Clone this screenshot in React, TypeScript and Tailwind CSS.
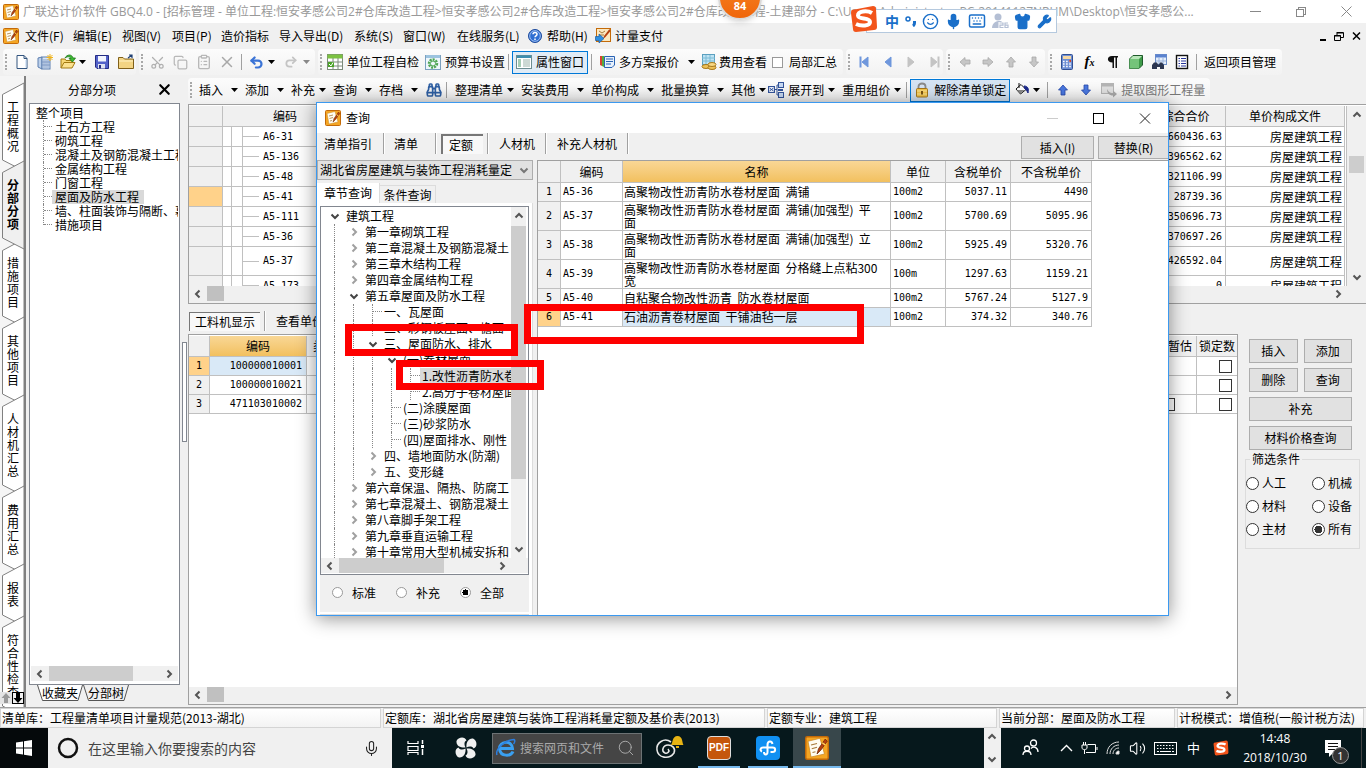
import React from "react";
import { Mic, Search, Shirt, Wrench, Smile, Keyboard, Scissors, Copy, ClipboardList, X, Binoculars, Volume2, Undo2, Redo2 } from "lucide-react";

const MONO = "font-['DejaVu_Sans_Mono','Noto_Sans_CJK_SC',monospace] text-[10px]";

/* ---------- icons ---------- */

function AppIcon({ size = 16 }: { size?: number }) {
  return (
    <svg width={size} height={size} viewBox="0 0 16 16" className="shrink-0">
      <rect x="0.5" y="0.5" width="15" height="15" rx="1" fill="#f5a623" stroke="#c46a08" />
      <path d="M2 3.500L10 1.500L13 12L4 14Z" fill="#fffdf2" stroke="#c98a2a" strokeWidth="0.5" />
      <path d="M4 6L8 5M4.500 8.500L8 7.500M5 11L7 10.500" stroke="#a87a3c" strokeWidth="0.8" />
      <path d="M13.500 2L9 8.500L8 12L10.500 9.500L14.800 3.500Z" fill="#b5400f" stroke="#6e2405" strokeWidth="0.5" />
      <path d="M11.500 4.500L13.500 6" stroke="#ffd45c" />
    </svg>
  );
}

function Icon({ children, w = 16 }: { children: React.ReactNode; w?: number }) {
  return (
    <svg width={w} height="16" viewBox="0 0 16 16" className="shrink-0" fill="none">
      {children}
    </svg>
  );
}

const NewDoc = () => (
  <Icon>
    <path d="M3 1.5H10L13 4.5V14.5H3Z" fill="#fff" stroke="#33557f" />
    <path d="M10 1.5V4.5H13" stroke="#33557f" />
    <path d="M12 6V13.5" stroke="#b9d0ec" />
  </Icon>
);
const NewBook = () => (
  <Icon>
    <path d="M1 4L5 3V15L1 13Z" fill="#bcd0ea" stroke="#5d7fb0" />
    <rect x="5" y="3" width="8" height="12" fill="#d9e6f6" stroke="#5d7fb0" />
    <path d="M7 5V14M9 5V14M11 5V14M5 8H13M5 11H13" stroke="#7391be" strokeWidth="0.8" />
    <path d="M13 0V7M9.5 3.5H16M10.5 1L15.5 6M15.5 1L10.5 6" stroke="#f2b51d" />
  </Icon>
);
const OpenFolder = () => (
  <Icon>
    <path d="M1 14V5H5L6 6.500H12V9" fill="#f7d774" stroke="#a27a12" />
    <path d="M1 14L4 8.500H15L12 14Z" fill="#fbe18f" stroke="#a27a12" />
    <path d="M5 4C7 0 12 0 13 4H15.500L12.500 8L9 4.500H11C10 2.500 8 2 5 4Z" stroke="#1f7a1a" fill="#3cb834" strokeWidth="0.800" />
  </Icon>
);
const Save = () => (
  <Icon>
    <path d="M1.500 1.500H14.500V14.500H3L1.500 13Z" fill="#5362c9" stroke="#252c84" />
    <rect x="4" y="2" width="8" height="5.500" fill="#f2f5ff" />
    <rect x="4" y="10" width="7" height="4.500" fill="#dfe3f0" />
    <rect x="5" y="11" width="2" height="3.500" fill="#252c84" />
  </Icon>
);
const Folder = () => (
  <Icon>
    <path d="M0.500 3.500H5L6.500 5H15.500V14.500H0.500Z" fill="#f3d483" stroke="#80601a" />
    <path d="M1 7H15" stroke="#fff2c4" />
    <path d="M10 4L14 1M14 4V1H11" stroke="#1e3f73" strokeWidth="1.200" />
  </Icon>
);
const GridCheck = () => (
  <Icon>
    <rect x="0.500" y="0.500" width="15" height="15" fill="#fff" stroke="#7c8a7a" />
    <rect x="0.500" y="0.500" width="15" height="4" fill="#7cc242" />
    <path d="M0 8H16M0 12H16M6 4V16M11 4V16" stroke="#7c8a7a" />
    <rect x="1" y="8" width="6" height="5" fill="#4ba229" />
    <path d="M2 10L4 12L6 8.500" stroke="#fff" />
  </Icon>
);
const GearWindow = () => (
  <Icon>
    <rect x="0.500" y="1.500" width="15" height="14" fill="#eef6fc" stroke="#7ba0bf" />
    <rect x="1" y="1" width="14" height="3" fill="#9cc3df" />
    <circle cx="8" cy="9.500" r="4" stroke="#4da552" strokeWidth="2.400" strokeDasharray="2 1" />
    <circle cx="8" cy="9.500" r="2.500" stroke="#4da552" />
  </Icon>
);
const ListWindow = () => (
  <Icon>
    <rect x="0.500" y="1.500" width="15" height="13" fill="#fff" stroke="#6c8d91" />
    <rect x="1" y="1.500" width="14" height="2.500" fill="#3f8fb0" />
    <path d="M2 6H5M2 8H5M2 10H5M2 12H5" stroke="#4c9a6a" />
    <path d="M7 6H14M7 8H14M7 10H14M7 12H14" stroke="#9ab2a9" />
  </Icon>
);
const Plans = () => (
  <Icon>
    <path d="M1 2V11L3 12V2Z" fill="#d8412f" />
    <path d="M3 2V12L5 13V2Z" fill="#58ac3d" />
    <path d="M5.500 2.500H15.500V11L13 13.500H5.500Z" fill="#e8f1fc" stroke="#2a63b4" />
    <path d="M7 5H14M7 7.500H14M7 10H12" stroke="#2a63b4" />
  </Icon>
);
const Coins = () => (
  <Icon>
    <rect x="1.500" y="0.500" width="12" height="10" fill="#bfe3f3" stroke="#5ba0c0" />
    <path d="M1 4H14M1 7H14M5 1V10M9 1V10" stroke="#7bbbd6" />
    <ellipse cx="5" cy="12.500" rx="4" ry="2" fill="#eec25a" stroke="#a97a1d" />
    <ellipse cx="11" cy="13.500" rx="4" ry="2" fill="#eec25a" stroke="#a97a1d" />
    <ellipse cx="11" cy="10.500" rx="4" ry="2" fill="#f8d885" stroke="#a97a1d" />
  </Icon>
);
const Nav = ({ kind, c }: { kind: "first" | "prev" | "next" | "last"; c: string }) => (
  <Icon>
    {(kind === "first" || kind === "prev") && <path d="M11 3V13L5 8Z" fill={c} stroke={c} />}
    {(kind === "next" || kind === "last") && <path d="M5 3V13L11 8Z" fill={c} stroke={c} />}
    {kind === "first" && <path d="M3.500 2.500V13.500" stroke={c} strokeWidth="2" />}
    {kind === "last" && <path d="M12.500 2.500V13.500" stroke={c} strokeWidth="2" />}
  </Icon>
);
const BlockArrow = ({ dir, c, s = "none" }: { dir: "l" | "r" | "u" | "d"; c: string; s?: string }) => {
  const d = {
    l: "M3 8L8 3.500V6H13V10H8V12.500Z",
    r: "M13 8L8 3.500V6H3V10H8V12.500Z",
    u: "M8 3L12.500 8H10V13H6V8H3.500Z",
    d: "M8 13L12.500 8H10V3H6V8H3.500Z",
  }[dir];
  return (
    <Icon>
      <path d={d} fill={c} stroke={s} strokeWidth="0.800" />
    </Icon>
  );
};
const Calc = () => (
  <Icon>
    <rect x="2.500" y="0.500" width="11" height="15" rx="1" fill="#6e8fd4" stroke="#304f92" />
    <rect x="4" y="2" width="8" height="3" fill="#f6d8a4" />
    <path d="M4 7.500H12M4 10H12M4 12.500H12" stroke="#fff" strokeWidth="1.500" strokeDasharray="1.600 1.500" />
    <path d="M10.300 7H12" stroke="#d34524" strokeWidth="2" />
  </Icon>
);
const Pilcrow = () => (
  <Icon>
    <path d="M7 2H13V3.500H12V14H10.500V3.500H9V14H7.500V8.500C1.500 8.500 1.500 2 7 2Z" fill="#111" />
  </Icon>
);
const Cube = () => (
  <Icon>
    <path d="M1.500 5L5 1.500H14.500V11L11 14.500H1.500Z" fill="#3e9b49" stroke="#1f5a2b" />
    <path d="M1.500 5H11V14.500H1.500Z" fill="#74c47a" />
    <path d="M2 5L5 2H14L11 5Z" fill="#b9e6b9" />
  </Icon>
);
const TableFind = () => (
  <Icon>
    <rect x="4.500" y="0.500" width="11" height="10" fill="#e4eefb" stroke="#6e8fc8" />
    <rect x="4.500" y="0.500" width="11" height="3" fill="#5a82cf" />
    <path d="M5 7H15M8 4V10M12 4V10" stroke="#9bb3dc" />
    <path d="M1 11L3 8.500H6L7 10.500H8L9 8.500H11L13 11V15H9V13H6V15H1Z" fill="#2b3550" />
  </Icon>
);
const ListDoc = () => (
  <Icon>
    <rect x="2.500" y="1.500" width="11" height="13" fill="#fff" stroke="#111" strokeWidth="1.400" />
    <path d="M4.500 4.500H6M4.500 7H6M4.500 9.500H6M4.500 12H6M7 4.500H12M7 7H12M7 9.500H12M7 12H12" stroke="#26349a" />
  </Icon>
);
const Expand = () => (
  <Icon>
    <rect x="0.500" y="4.500" width="6" height="6" fill="#e9effa" stroke="#33549a" />
    <path d="M1.500 6L5.500 9M5.500 6L1.500 9" stroke="#33549a" />
    <path d="M7 7.500H9M9 3V13M9 3H10M9 13H10" stroke="#33549a" />
    <rect x="10.500" y="0.500" width="5" height="5" fill="#c9daf4" stroke="#33549a" />
    <rect x="10.500" y="10.500" width="5" height="5" fill="#c9daf4" stroke="#33549a" />
    <path d="M10 8H15" stroke="#33549a" strokeWidth="2" />
  </Icon>
);
const Lock = () => (
  <Icon>
    <path d="M4.500 7V4.500C4.500 0.500 11.500 0.500 11.500 4.500V7" stroke="#8a8a8a" strokeWidth="1.800" />
    <rect x="2.500" y="6.500" width="11" height="8.500" rx="1" fill="#f5c64b" stroke="#a6771a" />
    <path d="M3 9H13M3 12H13" stroke="#fae49a" />
    <path d="M8 9V12.500" stroke="#7a5410" strokeWidth="2" />
  </Icon>
);
const Bucket = () => (
  <Icon>
    <path d="M2 7L7 2.500L12 7.500L6.500 12Z" fill="#fff" stroke="#111" />
    <path d="M3 8H11L6.500 11.500Z" fill="#8a8a8a" />
    <path d="M5 1V6" stroke="#111" />
    <path d="M10 4C14 4 15 7 14 11C13 9 12.500 8 11 7Z" fill="#1c2a8c" stroke="#1c2a8c" />
  </Icon>
);
const Extract = () => (
  <Icon>
    <rect x="0.500" y="1.500" width="12" height="10" fill="#e0e0e0" stroke="#b5b5b5" />
    <rect x="0.500" y="1.500" width="12" height="3" fill="#b5b5b5" />
    <path d="M6 7C8 11 10 11 12 11V8.500L16 12L12 15.500V13.500C8 13.500 6 11 6 7Z" fill="#a9a9a9" />
  </Icon>
);
const Help = () => (
  <Icon>
    <circle cx="8" cy="8" r="6.500" fill="#2f6fd2" stroke="#1d4a9c" />
    <circle cx="8" cy="8" r="5.300" stroke="#cfe0fa" strokeWidth="0.700" />
    <path d="M6 6.300C6 3.800 10 3.800 10 6.200C10 7.800 8 7.800 8 9.300M8 10.500V12" stroke="#fff" strokeWidth="1.500" />
  </Icon>
);
const PayIcon = () => (
  <Icon>
    <rect x="1.500" y="0.500" width="14" height="13" fill="#fbe8c0" stroke="#c46a08" />
    <path d="M4 3L7 5L10 3M5 7H9" stroke="#a87a3c" />
    <path d="M14.500 1L9 8L8 11L10.500 9L15.500 3Z" fill="#b5400f" />
    <path d="M0.500 8.500H4V6L9 10.500L4 15V12.500H0.500Z" fill="#2f8fe0" stroke="#1a5ca0" strokeWidth="0.700" />
  </Icon>
);
const SogouS = ({ size }: { size: number }) => (
  <svg width={size} height={size} viewBox="0 0 28 28" className="shrink-0">
    <path d="M2 5L23 1Q26 1 26 4L27 22Q27 25 24 25L6 27Q3 27 3 24L1 8Q1 5 2 5Z" fill="#f2541b" />
    <path d="M22 8C17 5 8 6 8 10.500C8 15 20 12 20 17C20 21 11 21.500 6 19" fill="none" stroke="#fff" strokeWidth="4" />
  </svg>
);

function Chev({ dir, c = "#555", className = "" }: { dir: "l" | "r" | "u" | "d"; c?: string; className?: string }) {
  const d = { l: "M6.500 1.500L3 5L6.500 8.500", r: "M3.500 1.500L7 5L3.500 8.500", u: "M1.500 6.500L5 3L8.500 6.500", d: "M1.500 3.500L5 7L8.500 3.500" }[dir];
  return (
    <svg width="10" height="10" viewBox="0 0 10 10" className={"shrink-0 " + className}>
      <path d={d} fill="none" stroke={c} strokeWidth="2" />
    </svg>
  );
}

/* ---------- toolbar parts ---------- */

const Grip = () => <span className="mx-0.5 h-4 w-[3px] shrink-0 border-l-2 border-dotted border-[#a8a8a8]" />;
const Sep = () => <span className="mx-[3px] h-4 w-px shrink-0 bg-[#a0a0a0]" />;
const Caret = ({ c = "#000" }: { c?: string }) => (
  <svg width="7" height="4" viewBox="0 0 7 4" className="shrink-0">
    <path d="M0 0H7L3.500 4Z" fill={c} />
  </svg>
);
function Group({ children, className = "" }: { children: React.ReactNode; className?: string }) {
  return <div className={"flex h-full shrink-0 items-center rounded-sm bg-linear-to-b from-[#fcfcfc] to-[#f2f2f2] " + className}>{children}</div>;
}
function IconBtn({ label, children, className = "w-[23px]" }: { label: string; children: React.ReactNode; className?: string }) {
  return (
    <button aria-label={label} className={"flex shrink-0 items-center justify-center " + className}>
      {children}
    </button>
  );
}
function Drop({ label, tight = false, last = false }: { label: string; tight?: boolean; last?: boolean }) {
  return (
    <button className={"flex shrink-0 items-center whitespace-nowrap " + (tight ? "gap-1 " : "gap-2 ") + (last ? "pr-0.5" : "pr-[7px]")}>
      {label}
      <Caret />
    </button>
  );
}

const menus: [string, string][] = [
  ["文件(F)", "w-12"], ["编辑(E)", "w-[49px]"], ["视图(V)", "w-[50px]"], ["项目(P)", "w-[49px]"], ["造价指标", "w-[58px]"],
  ["导入导出(D)", "w-[75px]"], ["系统(S)", "w-[49px]"], ["窗口(W)", "w-[54px]"], ["在线服务(L)", "w-[70px]"],
];

function TopBars() {
  return (
    <>
      <header className="flex h-[23px] shrink-0 items-center bg-white pl-[3px] text-[#999]">
        <AppIcon />
        <h1 className="ml-1 min-w-0 overflow-hidden font-['Open_Sans','Noto_Sans_CJK_SC',sans-serif] whitespace-nowrap">
          广联达计价软件 GBQ4.0 - [招标管理 - 单位工程:恒安孝感公司2#仓库改造工程&gt;恒安孝感公司2#仓库改造工程&gt;恒安孝感公司2#仓库改造工程-土建部分 - C:\Users\Administrator.PC-20141127NRHM\Desktop\恒安孝感公...
        </h1>
        <div className="ml-auto flex shrink-0 items-center gap-[35px] pr-[14px]">
          <button aria-label="最小化" className="h-px w-[11px] bg-[#888]" />
          <button aria-label="还原" className="relative size-[10px]">
            <span className="absolute top-0 right-0 size-2 border border-[#888]" />
            <span className="absolute bottom-0 left-0 size-2 border border-[#888] bg-white" />
          </button>
          <button aria-label="关闭"><svg width="11" height="11"><path d="M0.500 0.500L10.500 10.500M10.500 0.500L0.500 10.500" stroke="#888" /></svg></button>
        </div>
      </header>
      <nav className="flex h-[26px] shrink-0 items-center pl-[3px]">
        <AppIcon />
        <div className="ml-1.5 flex items-center">
          {menus.map(([t, w]) => (
            <button key={t} className={"shrink-0 text-left whitespace-nowrap " + w}>{t}</button>
          ))}
        </div>
        <button className="flex w-[68px] items-center gap-1 whitespace-nowrap"><Help />帮助(H)</button>
        <button className="flex items-center gap-1 whitespace-nowrap"><PayIcon />计量支付</button>
        <div className="ml-auto flex items-center gap-2 pr-[5px]">
          <button aria-label="最小化文档" className="mt-2 h-0.5 w-1.5 bg-black" />
          <button aria-label="还原文档"><svg width="10" height="9"><path d="M3 0.500H9.500V5.500H7M3 0V3M0.500 3.500H6.500V8.500H0.500Z M0 4H7M3 1H9" fill="none" stroke="#000" /></svg></button>
          <button aria-label="关闭文档"><svg width="9" height="8"><path d="M1 0.500L8 7.500M8 0.500L1 7.500" stroke="#000" strokeWidth="1.500" /></svg></button>
        </div>
      </nav>
      <div className="mb-px flex h-[26px] shrink-0 items-center gap-[3px] pl-[3px]">
        <Group className="w-[133px]">
          <Grip />
          <IconBtn label="新建"><NewDoc /></IconBtn>
          <IconBtn label="新建工程"><NewBook /></IconBtn>
          <IconBtn label="打开"><OpenFolder /></IconBtn>
          <Caret />
          <IconBtn label="保存" className="ml-1 w-6"><Save /></IconBtn>
          <IconBtn label="文件夹"><Folder /></IconBtn>
        </Group>
        <Group className="w-[176px]">
          <Grip />
          <IconBtn label="剪切"><Scissors size={15} color="#b0b0b0" className="-rotate-90" /></IconBtn>
          <IconBtn label="复制"><Copy size={15} color="#b8b8b8" /></IconBtn>
          <IconBtn label="粘贴"><ClipboardList size={16} color="#b8b8b8" /></IconBtn>
          <IconBtn label="删除"><X size={18} color="#a8a8a8" /></IconBtn>
          <Sep />
          <IconBtn label="撤销"><Undo2 size={15} color="#3b74d6" strokeWidth={3.5} /></IconBtn>
          <Caret />
          <IconBtn label="重做" className="ml-1 w-6"><Redo2 size={14} color="#c4c4c4" strokeWidth={3} /></IconBtn>
          <Caret c="#888" />
        </Group>
        <Group className="w-[525px]">
          <Grip />
          <button className="flex items-center gap-1 pl-0.5 whitespace-nowrap"><GridCheck />单位工程自检</button>
          <button className="ml-1.5 flex items-center gap-1 whitespace-nowrap"><GearWindow />预算书设置</button>
          <Sep />
          <button className="flex h-[23px] items-center gap-1 border border-[#0078d7] bg-[#e1ecf6] px-[3px] whitespace-nowrap"><ListWindow />属性窗口</button>
          <Sep />
          <button className="ml-1 flex items-center gap-1 whitespace-nowrap"><Plans />多方案报价<span className="w-px" /><Caret /></button>
          <button className="ml-1.5 flex items-center gap-0.5 whitespace-nowrap"><Coins />费用查看</button>
          <label className="ml-[5px] flex items-center gap-1.5 whitespace-nowrap">
            <input type="checkbox" className="size-[11px] appearance-none border border-[#999] bg-white" />局部汇总
          </label>
        </Group>
        <Group className="w-[97px]">
          <Grip />
          <IconBtn label="首条"><Nav kind="first" c="#6f97dc" /></IconBtn>
          <IconBtn label="上一条"><Nav kind="prev" c="#6f97dc" /></IconBtn>
          <IconBtn label="下一条"><Nav kind="next" c="#c4c4c4" /></IconBtn>
          <IconBtn label="末条"><Nav kind="last" c="#c4c4c4" /></IconBtn>
        </Group>
        <Group className="w-[99px]">
          <Grip />
          <IconBtn label="左移"><BlockArrow dir="l" c="#c6c6c6" s="#a8a8a8" /></IconBtn>
          <IconBtn label="右移"><BlockArrow dir="r" c="#c6c6c6" s="#a8a8a8" /></IconBtn>
          <IconBtn label="上移"><BlockArrow dir="u" c="#c6c6c6" s="#a8a8a8" /></IconBtn>
          <IconBtn label="下移"><BlockArrow dir="d" c="#c6c6c6" s="#a8a8a8" /></IconBtn>
        </Group>
        <Group className="pr-1.5">
          <Grip />
          <IconBtn label="计算器"><Calc /></IconBtn>
          <IconBtn label="函数"><span className="font-['Liberation_Serif',serif] text-[15px] leading-4 font-bold italic">f<span className="text-[10px]">x</span></span></IconBtn>
          <IconBtn label="段落"><Pilcrow /></IconBtn>
          <IconBtn label="图元"><Cube /></IconBtn>
          <IconBtn label="查找表"><TableFind /></IconBtn>
          <IconBtn label="报表"><ListDoc /></IconBtn>
          <Sep />
          <button className="ml-1 whitespace-nowrap">返回项目管理</button>
        </Group>
      </div>
    </>
  );
}

function EditToolbar() {
  return (
    <div className="mt-0.5 flex h-6 shrink-0 items-center">
      <Group className="pr-[5px]">
        <Grip />
        <span className="w-1" />
        <Drop label="插入" />
        <Drop label="添加" />
        <Drop label="补充" tight />
        <Drop label="查询" />
        <Drop label="存档" />
        <IconBtn label="查找" className="w-[18px]"><Binoculars size={16} color="#2e5fa3" strokeWidth={2.5} /></IconBtn>
        <Sep />
        <span className="w-[5px]" />
        <Drop label="整理清单" tight />
        <Drop label="安装费用" />
        <Drop label="单价构成" />
        <Drop label="批量换算" />
        <Drop label="其他" tight last />
        <Expand />
        <span className="w-1" />
        <Drop label="展开到" tight />
        <Drop label="重用组价" tight last />
        <Sep />
        <button className="flex h-[23px] items-center gap-1 border border-[#0078d7] bg-[#d5e3f2] px-[3px] whitespace-nowrap"><Lock />解除清单锁定</button>
        <IconBtn label="填充"><Bucket /></IconBtn>
        <Caret />
        <span className="w-1" />
        <Sep />
        <IconBtn label="上"><BlockArrow dir="u" c="#4a78e0" s="#2747a8" /></IconBtn>
        <IconBtn label="下"><BlockArrow dir="d" c="#4a78e0" s="#2747a8" /></IconBtn>
        <button className="ml-1 flex items-center gap-1 whitespace-nowrap text-[#777]"><Extract />提取图形工程量</button>
      </Group>
    </div>
  );
}

/* ---------- left side ---------- */

const sideTabs = ["工程概况", "分部分项", "措施项目", "其他项目", "人材机汇总", "费用汇总", "报表", "符合性检查"];

function SideTabs() {
  return (
    <aside className="relative w-[26px] shrink-0 overflow-hidden border-r-2 border-[#808080] bg-[#f5f5f5] pt-[11px]">
      {sideTabs.map((t) => {
        const h = t.length * 13 + 26;
        const on = t === "分部分项";
        return (
          <button key={t} className={"relative ml-0.5 block w-[22px] py-[13px] " + (on ? "z-10 font-bold" : "")}>
            <svg width="22" height={h} className="absolute inset-0 overflow-visible">
              <path d={`M22 -4L0.500 7.500V${h - 5}L22 ${h + 6}Z`} fill={on ? "#f0f0f0" : "#fff"} stroke="#808080" />
            </svg>
            <span className="relative flex flex-col items-center">
              {[...t].map((ch, i) => <span key={i} className="h-[13px] leading-[13px]">{ch}</span>)}
            </span>
          </button>
        );
      })}
      <div className="absolute bottom-[3px] left-0 z-20 flex">
        <button aria-label="向上滚动" className="flex h-3 w-3 items-center justify-center bg-[#e4e4e4]"><BlockArrow dir="u" c="#999" /></button>
        <button aria-label="向下滚动" className="flex h-3 w-3 items-center justify-center border border-black bg-[#f0f0f0]"><BlockArrow dir="d" c="#000" /></button>
      </div>
    </aside>
  );
}

const parts = ["土石方工程", "砌筑工程", "混凝土及钢筋混凝土工程", "金属结构工程", "门窗工程", "屋面及防水工程", "墙、柱面装饰与隔断、幕墙", "措施项目"];

function HScroll({ thumb, className = "" }: { thumb: string; className?: string }) {
  return (
    <div className={"flex h-[15px] shrink-0 items-center bg-[#f0f0f0] " + className}>
      <Chev dir="l" className="mx-1" />
      <span className={"h-full " + thumb} />
      <Chev dir="r" className="mr-1 ml-auto" />
    </div>
  );
}

function PartTree() {
  return (
    <section className="flex w-[154px] shrink-0 flex-col pl-[3px]">
      <div className="flex h-[27px] shrink-0 items-center">
        <h2 className="flex-1 pl-[39px]">分部分项</h2>
        <button aria-label="关闭面板" className="mr-[7px]"><X size={17} strokeWidth={3} /></button>
      </div>
      <div className="flex min-h-0 flex-1 flex-col border border-[#828790] bg-white p-px">
        <div className="min-h-0 flex-1 overflow-hidden pt-px pl-[5px] leading-[14px] whitespace-nowrap">
          <div>整个项目</div>
          <ul className="pl-[7px]">
            {parts.map((p, i) => (
              <li key={p} className="flex h-[14px]">
                <span className={"w-px shrink-0 border-l border-dotted border-[#888] " + (i === parts.length - 1 ? "h-[7px]" : "h-full")} />
                <span className="h-[7px] w-2 shrink-0 border-b border-dotted border-[#888]" />
                <span className={"shrink-0 " + (p === "屋面及防水工程" ? "bg-[#d9d9d9] pr-[5px] pl-[3px]" : "pl-[3px]")}>{p}</span>
              </li>
            ))}
          </ul>
        </div>
        <HScroll thumb="w-[84px] bg-[#cdcdcd]" />
        <div className="h-0.5" />
      </div>
      <div className="flex h-[22px] shrink-0 items-start pl-2">
        {["收藏夹", "分部树"].map((t) => (
          <button key={t} className="relative h-4 w-[46px] leading-4">
            <svg width="46" height="16" className="absolute inset-0">
              <path d="M0.500 0L5.500 15.500H41L45.500 0" fill={t === "收藏夹" ? "#fff" : "#f0f0f0"} stroke="#555" />
            </svg>
            <span className="relative">{t}</span>
          </button>
        ))}
      </div>
    </section>
  );
}

/* ---------- main grids ---------- */

const upper: [string, string][] = [
  ["A6-31", "660436.63"], ["A5-136", "396562.62"], ["A5-48", "321106.99"], ["A5-41", "28739.36"],
  ["A5-111", "350696.73"], ["A5-36", "370697.26"], ["A5-37", "426592.04"], ["A5-173", "0"],
];
const cell = "border-r border-b border-[#c0c0c0] p-0";

function UpperGrid() {
  return (
    <div className="flex h-[200px] shrink-0 flex-col border border-r-0 border-[#a0a0a0] bg-white pt-px">
      <div className="flex min-h-0 flex-1">
        <div className="min-w-0 flex-1 overflow-hidden border-r border-[#c0c0c0] pr-px">
          <table className="w-full table-fixed border-separate border-spacing-0">
            <colgroup><col className="w-[34px]" /><col className="w-[125px]" /><col /><col className="w-[120px]" /><col className="w-[119px]" /></colgroup>
            <thead>
              <tr className="h-[21px] bg-[#f0f0f0]">
                <th className={cell} />
                <th className={cell + " font-normal"}>编码</th>
                <th className={cell + " font-normal"}>名称</th>
                <th className={cell + " pl-10 font-normal"}>综合合价</th>
                <th className={cell + " font-normal"}>单价构成文件</th>
              </tr>
            </thead>
            <tbody>
              {upper.map(([code, price]) => (
                <tr key={code} className={code === "A5-37" ? "h-[29px]" : "h-5"}>
                  <td className={cell + (code === "A5-41" ? " bg-[#ffd28a]" : " bg-[#f0f0f0]")} />
                  <td className={cell}>
                    <div className={"flex items-center " + (code === "A5-37" ? "h-7" : "h-[19px]")}>
                      <span className="h-full w-[9px] border-r border-[#c0c0c0]" />
                      <span className="h-full w-[11px] border-r border-[#c0c0c0]" />
                      <span className="mr-1 h-px w-4 bg-[#c0c0c0]" />
                      <span className={MONO}>{code}</span>
                    </div>
                  </td>
                  <td className={cell} />
                  <td className={cell + " pr-[3px] text-right leading-4 " + MONO}>{price}</td>
                  <td className={cell + " pr-0.5 text-right leading-[17px]"}>房屋建筑工程</td>
                </tr>
              ))}
            </tbody>
          </table>
        </div>
        <div className="flex w-[19px] shrink-0 flex-col items-center bg-[#f0f0f0] pb-1">
          <Chev dir="u" className="mt-1" />
          <span className="mt-9 h-[17px] w-[15px] bg-[#cdcdcd]" />
          <Chev dir="d" className="mt-auto" />
        </div>
      </div>
      <HScroll thumb="w-[17px] bg-[#c0c0c0]" className="pr-[19px]" />
      <div className="h-0.5 bg-[#f0f0f0]" />
    </div>
  );
}

const CheckBox = ({ label }: { label: string }) => (
  <input type="checkbox" aria-label={label} className="block size-[13px] appearance-none border border-[#333] bg-white" />
);

function LowerGrid() {
  return (
    <div className="mr-px flex min-w-0 flex-1 flex-col border border-[#a0a0a0] bg-white pt-px">
      <div className="min-h-0 flex-1 overflow-hidden">
        <table className="w-full table-fixed border-separate border-spacing-0">
          <colgroup><col className="w-[21px]" /><col className="w-[97px]" /><col /><col className="w-[60px]" /><col className="w-10" /></colgroup>
          <thead>
            <tr className="h-[21px] bg-[#f0f0f0]">
              <th className={cell} />
              <th className={cell + " bg-linear-to-b from-[#f9d795] to-[#f2c05e] font-normal"}>编码</th>
              <th className={cell + " pl-1.5 text-left font-normal"}>类别</th>
              <th className={cell + " pr-1 text-right font-normal"}>暂估</th>
              <th className={cell + " border-r-0 font-normal"}>锁定数</th>
            </tr>
          </thead>
          <tbody>
            {["100000010001", "100000010021", "471103010002"].map((c, i) => (
              <tr key={c} className="h-[19px]">
                <td className={cell + " text-center " + MONO + (i === 0 ? " bg-[#ffd28a]" : " bg-[#f0f0f0]")}>{i + 1}</td>
                <td className={cell + " pr-1 text-right " + MONO + (i === 0 ? " bg-[#d9e9f7]" : "")}>{c}</td>
                <td className={cell} />
                <td className={cell + " pl-[25px]"}>{i === 2 && <CheckBox label="暂估 3" />}</td>
                <td className={cell + " border-r-0 pl-[22px]"}><CheckBox label={"锁定数 " + (i + 1)} /></td>
              </tr>
            ))}
          </tbody>
        </table>
      </div>
      <HScroll thumb="w-[17px] bg-[#c0c0c0]" />
      <div className="h-0.5 bg-[#f0f0f0]" />
    </div>
  );
}

const btn = "h-6 border border-[#adadad] bg-[#e1e1e1] whitespace-nowrap";

function SidePanel() {
  return (
    <div className="w-[127px] shrink-0 pt-[5px] pr-1.5 pl-1.5">
      <div className="grid grid-cols-2 gap-x-1.5 gap-y-[5px] pr-2 pl-1">
        <button className={btn}>插入</button>
        <button className={btn}>添加</button>
        <button className={btn}>删除</button>
        <button className={btn}>查询</button>
        <button className={btn + " col-span-2"}>补充</button>
        <button className={btn + " col-span-2"}>材料价格查询</button>
      </div>
      <fieldset className="mt-px h-[98px] border border-[#dcdcdc]">
        <legend className="ml-1 px-0.5 leading-4">筛选条件</legend>
        <div className="grid grid-cols-[66px_1fr] gap-y-[7px] pt-2">
          {["人工", "机械", "材料", "设备", "主材", "所有"].map((t) => (
            <label key={t} className="flex h-4 items-center gap-[3px] whitespace-nowrap">
              <input type="radio" name="filter" defaultChecked={t === "所有"} className="size-[13px] shrink-0 appearance-none rounded-full border border-[#333] bg-white checked:bg-[radial-gradient(circle,#333_4px,#fff_4px)]" />
              {t}
            </label>
          ))}
        </div>
      </fieldset>
    </div>
  );
}

/* ---------- query dialog ---------- */

type Node = { d: number; t: string; k: "open" | "shut" | "leaf"; on?: boolean };
const chapters: Node[] = [
  { d: 0, t: "建筑工程", k: "open" },
  { d: 1, t: "第一章砌筑工程", k: "shut" },
  { d: 1, t: "第二章混凝土及钢筋混凝土", k: "shut" },
  { d: 1, t: "第三章木结构工程", k: "shut" },
  { d: 1, t: "第四章金属结构工程", k: "shut" },
  { d: 1, t: "第五章屋面及防水工程", k: "open" },
  { d: 2, t: "一、瓦屋面", k: "leaf" },
  { d: 2, t: "二、彩钢板屋面、檐面", k: "leaf" },
  { d: 2, t: "三、屋面防水、排水", k: "open" },
  { d: 3, t: "(一)卷材屋面", k: "open" },
  { d: 4, t: "1.改性沥青防水卷材", k: "leaf", on: true },
  { d: 4, t: "2.高分子卷材屋面", k: "leaf" },
  { d: 3, t: "(二)涂膜屋面", k: "leaf" },
  { d: 3, t: "(三)砂浆防水", k: "leaf" },
  { d: 3, t: "(四)屋面排水、刚性", k: "leaf" },
  { d: 2, t: "四、墙地面防水(防潮)", k: "shut" },
  { d: 2, t: "五、变形缝", k: "shut" },
  { d: 1, t: "第六章保温、隔热、防腐工", k: "shut" },
  { d: 1, t: "第七章混凝土、钢筋混凝土", k: "shut" },
  { d: 1, t: "第八章脚手架工程", k: "shut" },
  { d: 1, t: "第九章垂直运输工程", k: "shut" },
  { d: 1, t: "第十章常用大型机械安拆和", k: "shut" },
];

const Guide = () => (
  <span className="flex h-4 w-[19px] shrink-0 justify-center">
    <span className="h-full border-l border-dotted border-[#888]" />
  </span>
);

function ChapterTree() {
  return (
    <ul className="min-w-0 flex-1 overflow-hidden pt-px pl-1">
      {chapters.map((n) => (
        <li key={n.t} className="flex h-4 items-center leading-4 whitespace-nowrap">
          {Array.from({ length: n.d }, (_, i) => <Guide key={i} />)}
          {n.k === "leaf" ? (
            <span className="flex h-4 w-[19px] shrink-0 pl-[9px]">
              <span className="h-full border-l border-dotted border-[#888]" />
              <span className="h-2 w-[9px] border-b border-dotted border-[#888]" />
            </span>
          ) : (
            <span className="flex w-[19px] shrink-0 justify-center"><Chev dir={n.k === "open" ? "d" : "r"} c={n.k === "open" ? "#444" : "#a0a0a0"} /></span>
          )}
          <span className={n.on ? "bg-[#d9d9d9] pl-0.5" : "pl-0.5"}>{n.t}</span>
        </li>
      ))}
    </ul>
  );
}

const quotas: [string, string, string, string, string, string][] = [
  ["A5-36", "高聚物改性沥青防水卷材屋面  满铺", "", "100m2", "5037.11", "4490"],
  ["A5-37", "高聚物改性沥青防水卷材屋面  满铺(加强型)  平", "面", "100m2", "5700.69", "5095.96"],
  ["A5-38", "高聚物改性沥青防水卷材屋面  满铺(加强型)  立", "面", "100m2", "5925.49", "5320.76"],
  ["A5-39", "高聚物改性沥青防水卷材屋面  分格缝上点粘300", "宽", "100m", "1297.63", "1159.21"],
  ["A5-40", "自粘聚合物改性沥青  防水卷材屋面", "", "100m2", "5767.24", "5127.9"],
  ["A5-41", "石油沥青卷材屋面  干铺油毡一层", "", "100m2", "374.32", "340.76"],
];

const VSep = () => <span className="h-[21px] w-0.5 shrink-0 border-l border-[#a0a0a0] bg-white" />;

function QueryDialog() {
  return (
    <section role="dialog" aria-label="查询" className="absolute top-[102px] left-[316px] z-30 flex h-[514px] w-[853px] flex-col border border-[#3b99f0] bg-[#f0f0f0] shadow-[0_2px_18px_rgba(0,0,0,0.45)]">
      <div className="flex h-[30px] shrink-0 items-center bg-white pl-2">
        <AppIcon />
        <span className="ml-[5px]">查询</span>
        <div className="ml-auto flex items-center gap-[35px] pr-4">
          <button aria-label="最小化窗口" className="h-px w-[11px] bg-[#ccc]" />
          <button aria-label="最大化窗口" className="size-[11px] border border-black" />
          <button aria-label="关闭窗口"><svg width="13" height="11"><path d="M1 0.500L11 10.500M11 0.500L1 10.500" stroke="#222" /></svg></button>
        </div>
      </div>
      <div className="flex h-[27px] shrink-0 items-start">
        <button className="w-[66px] pt-0.5 pr-1 leading-[18px]">清单指引</button><VSep />
        <button className="w-[50px] pt-0.5 pr-2 leading-[18px]">清单</button><VSep />
        <button className="mx-1 mt-px h-5 w-[42px] border-t-2 border-l-2 border-[#777] bg-[#f8f8f8] pr-1 leading-[18px]">定额</button><VSep />
        <button className="w-14 pt-0.5 leading-[18px]">人材机</button><VSep />
        <button className="w-[80px] pt-0.5 leading-[18px]">补充人材机</button><VSep />
        <div className="ml-auto flex gap-1 pt-[3px]">
          <button className="h-[23px] w-[73px] border border-[#adadad] bg-[#e1e1e1]">插入(I)</button>
          <button className="h-[23px] w-[70px] border border-r-0 border-[#adadad] bg-[#e1e1e1]">替换(R)</button>
        </div>
      </div>
      <div className="flex min-h-0 flex-1">
        <div className="flex w-[216px] shrink-0 flex-col">
          <div className="relative h-5 shrink-0">
            <select aria-label="定额库" className="h-5 w-full appearance-none border border-[#adadad] bg-[#e1e1e1] pl-0.5 leading-[18px]">
              <option>湖北省房屋建筑与装饰工程消耗量定</option>
            </select>
            <Chev dir="d" c="#777" className="pointer-events-none absolute top-[5px] right-1" />
          </div>
          <div className="flex h-[23px] shrink-0 items-end pt-[3px]">
            <button className="h-5 w-[63px] border-r border-[#dcdcdc] bg-white">章节查询</button>
            <button className="h-[18px] w-[56px] border-t border-r border-[#dcdcdc]">条件查询</button>
          </div>
          <div className="flex min-h-0 flex-1 flex-col border-r border-[#dcdcdc] bg-white px-[3px] pt-[3px]">
            <div className="flex min-h-0 flex-1 flex-col border border-[#828790] pb-px">
              <div className="flex min-h-0 flex-1">
                <ChapterTree />
                <div className="mr-0.5 flex w-[15px] shrink-0 flex-col items-center bg-[#f0f0f0] pt-1">
                  <Chev dir="u" />
                  <span className="mt-[5px] h-[253px] w-full bg-[#cdcdcd]" />
                  <Chev dir="d" className="mt-auto mb-1" />
                </div>
              </div>
              <HScroll thumb="w-[105px] bg-[#cdcdcd]" className="pr-[17px]" />
            </div>
            <div className="mb-0.5 flex h-[37px] shrink-0 items-center gap-5 bg-[#f0f0f0] pb-0.5 pl-3">
              {["标准", "补充", "全部"].map((t) => (
                <label key={t} className="flex items-center gap-[9px] whitespace-nowrap">
                  <input type="radio" name="scope" defaultChecked={t === "全部"} className="size-[11px] appearance-none rounded-full border border-[#999] bg-white checked:bg-[radial-gradient(circle,#000_3px,#fff_3px)]" />
                  {t}
                </label>
              ))}
            </div>
            <div className="h-px shrink-0 bg-[#dcdcdc]" />
          </div>
        </div>
        <div className="ml-1 min-w-0 flex-1 border-t border-l border-[#a0a0a0] bg-white">
          <table className="w-[554px] table-fixed border-separate border-spacing-0">
            <colgroup><col className="w-[23px]" /><col className="w-[62px]" /><col className="w-[268px]" /><col className="w-[55px]" /><col className="w-[65px]" /><col className="w-[81px]" /></colgroup>
            <thead>
              <tr className="h-[22px] bg-[#f0f0f0]">
                {["", "编码", "名称", "单位", "含税单价", "不含税单价"].map((h) => (
                  <th key={h} className={cell + " font-normal" + (h === "名称" ? " bg-linear-to-b from-[#f9d795] to-[#f2c05e]" : "")}>{h}</th>
                ))}
              </tr>
            </thead>
            <tbody>
              {quotas.map(([code, name, rest, unit, p1, p2], i) => (
                <tr key={code} className={rest ? "h-[29px]" : "h-[19px]"}>
                  <td className={cell + " text-center " + MONO + (i === 5 ? " bg-[#ffd28a]" : " bg-[#f0f0f0]")}>{i + 1}</td>
                  <td className={cell + " pl-0.5 " + MONO}>{code}</td>
                  <td className={cell + " pb-px pl-px leading-[13px] whitespace-pre" + (i === 5 ? " bg-[#d9e9f7]" : "")}>{name}{rest && <><br />{rest}</>}</td>
                  <td className={cell + " pl-0.5 " + MONO}>{unit}</td>
                  <td className={cell + " pr-[3px] text-right " + MONO}>{p1}</td>
                  <td className={cell + " pr-[3px] text-right " + MONO}>{p2}</td>
                </tr>
              ))}
            </tbody>
          </table>
        </div>
      </div>
    </section>
  );
}

/* ---------- bottom ---------- */

const stat = "flex items-center border border-[#d4d4d4] bg-linear-to-b from-white to-[#f3f3f3] pl-px whitespace-nowrap";

function StatusBar() {
  return (
    <footer className="flex h-[21px] shrink-0 gap-0.5 border-t border-[#a0a0a0] bg-[#f0f0f0] pr-0.5">
      <div className={stat + " w-[381px]"}>清单库：工程量清单项目计量规范(2013-湖北)</div>
      <div className={stat + " w-[382px]"}>定额库：湖北省房屋建筑与装饰工程消耗量定额及基价表(2013)</div>
      <div className={stat + " flex-1"}>定额专业：建筑工程</div>
      <div className={stat + " w-[176px]"}>当前分部：屋面及防水工程</div>
      <div className={stat + " w-[187px]"}>计税模式：增值税(一般计税方法)</div>
    </footer>
  );
}

const PETAL = "M10.500 10.500C6 11 1 9 1.500 4C3 0 10 -1 11.500 3.500C9 4.500 9 8 10.500 10.500Z";

function Taskbar() {
  return (
    <div className="flex h-10 shrink-0 items-center bg-[#06181c] text-white">
      <button aria-label="开始" className="flex h-full w-12 items-center justify-center bg-[#05090b]">
        <svg width="16" height="16"><path d="M0 2.500L7 1.500V7.500H0ZM8 1.300L16 0V7.500H8ZM0 8.500H7V14.500L0 13.500ZM8 8.500H16V16L8 14.700Z" fill="#fff" /></svg>
      </button>
      <label className="flex h-full w-[344px] items-center bg-[#f0f0f0] pl-[9px]">
        <svg width="22" height="22" className="shrink-0"><circle cx="11" cy="11" r="9" fill="none" stroke="#111" strokeWidth="2.500" /></svg>
        <input aria-label="搜索" placeholder="在这里输入你要搜索的内容" className="ml-[9px] min-w-0 flex-1 bg-transparent text-[14px] placeholder:text-[#444]" />
        <Mic size={17} color="#222" strokeWidth={1.5} className="mr-3" />
      </label>
      <button aria-label="任务视图" className="flex w-12 justify-center">
        <svg width="18" height="18"><path d="M1 2V4.500H11V2M1 16V13.500H11V16M1 7.500H11V11.500H1Z" fill="none" stroke="#fff" strokeWidth="1.200" /><path d="M15.500 1V5M15.500 10V16" stroke="#fff" strokeWidth="1.500" /><rect x="14" y="6" width="3" height="3" fill="#fff" /></svg>
      </button>
      <button aria-label="浏览器" className="flex w-[52px] justify-center">
        <svg width="22" height="22" viewBox="0 0 22 22" fill="#f0f0f0">
          <path d={PETAL} />
          <path d={PETAL} transform="rotate(90 11 11)" />
          <path d={PETAL} transform="rotate(180 11 11)" />
          <path d={PETAL} transform="rotate(270 11 11)" />
        </svg>
      </button>
      <label className="flex h-[31px] w-[150px] items-center border border-[#6c7274] bg-[#454545] pl-[3px]">
        <svg width="20" height="20" viewBox="0 0 20 20" className="shrink-0">
          <path d="M17 13.500C15 18.500 4.500 19 3.500 11C3 3 16 1.500 16.500 10.500H5" fill="none" stroke="#3aa0f0" strokeWidth="3" />
          <path d="M1 17C-1 12 8 2 18 1.500C19.500 2 18.500 5 17.500 6" fill="none" stroke="#2b7fe0" strokeWidth="1.500" />
        </svg>
        <input aria-label="搜索网页和文件" placeholder="搜索网页和文件" className="ml-1 min-w-0 flex-1 bg-transparent placeholder:text-[#aaa]" />
        <Search size={18} color="#aaa" strokeWidth={1.3} className="mr-1.5" />
      </label>
      <button aria-label="通知助手" className="ml-3 flex w-[30px] justify-center">
        <svg width="30" height="26" viewBox="0 0 30 26"><path d="M17 7C10 2 2 8 3 15C4 23 15 25 20 18C22 13 18 10 14 10C9 10 7 16 11 18C14 19 16 16 14 14" fill="none" stroke="#e8e8e8" strokeWidth="1.600" /><path d="M17 10C19 8 18 1 23.500 1C29 1 28 8 29.500 10ZM22 11H25V13H22Z" fill="#e8b414" /></svg>
      </button>
      <button aria-label="PDF" className="ml-3.5 flex h-full w-[42px] flex-col items-center border-b-2 border-[#76b9ed] pt-2">
        <span className="h-6 w-6 rounded-sm border border-[#ddd] bg-[#c5560c] text-center font-['Liberation_Sans',sans-serif] text-[10px] leading-[22px] font-bold">PDF</span>
      </button>
      <button aria-label="云助手" className="ml-2 flex h-full w-10 flex-col items-center border-b-2 border-[#76b9ed] pt-2">
        <svg width="24" height="24"><rect width="24" height="24" rx="4" fill="#1090f2" /><path d="M16.500 8C15.500 4 11.500 5 11.500 9V16C11.500 19.500 8 19 8 16M6 15.500C3.500 14.500 4.500 11.500 7 11.500H16.500C20 11.500 20 16 16.500 16H14.500" fill="none" stroke="#fff" strokeWidth="2" /></svg>
      </button>
      <button aria-label="广联达" className="ml-[5px] flex h-full w-12 flex-col items-center border-b-2 border-[#76b9ed] bg-[#38474b] pt-2"><AppIcon size={24} /></button>
      <div className="ml-auto flex h-full w-[17px] flex-col items-center justify-between bg-[#f0f0f0] py-1"><Chev dir="u" /><Chev dir="d" /></div>
      <button aria-label="人脉" className="ml-[21px]">
        <svg width="18" height="18" fill="none" stroke="#fff" strokeWidth="1.300"><circle cx="11.500" cy="4" r="3" /><circle cx="5" cy="9.500" r="2.500" /><path d="M1 16C1 11 9 11 9 16M9 9.500C11 7 16 8 16 13" /></svg>
      </button>
      <div className="ml-5 flex w-[117px] items-center justify-between">
        <svg width="13" height="8"><path d="M1 7L6.500 1.500L12 7" fill="none" stroke="#fff" strokeWidth="1.400" /></svg>
        <svg width="17" height="14" fill="none" stroke="#fff"><path d="M6.500 3.500H14.500V11.500H5M16 6V9M1 4H6V7C6 9 1 9 1 7ZM2.500 1V4M4.500 1V4M3.500 9V13" /></svg>
        <svg width="14" height="14" fill="none" stroke="#ddd"><path d="M1 13C1 6 6 1 13 1M4 13C4 8 8 4 13 4M7 13C7 9.500 9.500 7 13 7" /><path d="M10 13C10 11 11 10 13 10V13Z" fill="#fff" /></svg>
        <Volume2 size={17} strokeWidth={1.500} />
        <svg width="23" height="13" fill="none" stroke="#fff"><rect x="0.500" y="0.500" width="22" height="12" /><path d="M3 3.500H20M3 6.500H20" strokeDasharray="1.500 1.500" /><path d="M3 9.500H20" strokeDasharray="2 1 11 1" /></svg>
      </div>
      <span className="ml-2.5 text-[13px]">中</span>
      <span className="ml-[13px]"><SogouS size={16} /></span>
      <time className="ml-2 w-[76px] text-center font-['Open_Sans','Noto_Sans',sans-serif] text-[12px] leading-[19px]">14:48<br />2018/10/30</time>
      <button aria-label="通知" className="relative ml-2 h-6 w-[28px]">
        <svg width="16" height="18" className="absolute top-1 left-1"><path d="M0 0H16V13H8L4 17V13H0Z" fill="#fff" /><path d="M3 3.500H13M3 6.500H13M3 9.500H10" stroke="#111" /></svg>
        <span className="absolute right-0 -bottom-1 size-[17px] rounded-full border border-[#999] bg-[#333] text-center font-['Open_Sans',sans-serif] text-[11px] leading-[15px]">1</span>
      </button>
      <span className="ml-3 h-full w-px bg-[#444]" />
      <span className="w-1" />
    </div>
  );
}

function ImeBar() {
  return (
    <>
      <div className="absolute -top-6 left-[718px] z-40 flex size-[44px] items-end justify-center rounded-full border-2 border-[#d9d9d9] bg-linear-to-b from-[#f58220] to-[#f0660a] pb-1 font-['Open_Sans',sans-serif] text-[11px] font-bold text-white shadow-md">84</div>
      <div className="absolute top-[9px] left-[866px] z-40 flex h-6 w-[191px] items-center justify-between border border-[#b5c9de] bg-white pr-1 pl-[18px] text-[#1a6fc9]">
        <span className="text-[14px] font-bold">中</span>
        <svg width="12" height="12" fill="none" stroke="#1a6fc9"><circle cx="3" cy="4" r="2" strokeWidth="1.500" /><path d="M9.500 6V8Q9.500 10 8 11" strokeWidth="3" /></svg>
        <Smile size={17} />
        <Mic size={17} fill="#1a6fc9" />
        <Keyboard size={18} />
        <svg width="17" height="16" fill="#b4bfd4"><circle cx="6" cy="4" r="3.500" /><path d="M0 15C0 7 10 7 10 9V15Z" /><rect x="6.500" y="9" width="10" height="6.500" fill="#fff" /><path d="M7.500 10H11V12.200H8V14.500H11.500M16 10H13V14.500H16V12.200H13" fill="none" stroke="#b4bfd4" strokeWidth="1.200" /></svg>
        <Shirt size={17} fill="#1a6fc9" />
        <Wrench size={15} fill="#1a6fc9" />
      </div>
      <div className="absolute top-[5px] left-[850px] z-40"><SogouS size={28} /></div>
    </>
  );
}

export default function App() {
  return (
    <div className="relative flex h-screen flex-col overflow-hidden bg-[#f0f0f0] font-['Noto_Sans_CJK_SC',sans-serif] text-[12px] leading-4 text-black">
      <TopBars />
      <main className="flex min-h-0 flex-1">
        <SideTabs />
        <PartTree />
        <div className="flex w-2 shrink-0 items-center justify-center">
          <span className="h-[100px] w-[5px] border border-[#828790] bg-white" />
        </div>
        <div className="flex min-w-0 flex-1 flex-col">
          <EditToolbar />
          <div className="h-0.5 shrink-0" />
          <UpperGrid />
          <div className="flex h-[30px] shrink-0 items-center pt-1">
            <button className="ml-px h-[19px] w-[71px] border-t border-l border-[#777] bg-[#f8f8f8] leading-[17px] whitespace-nowrap">工料机显示</button>
            <span className="ml-1 h-5 w-0.5 border-l border-[#a0a0a0] bg-white" />
            <button className="ml-2.5 whitespace-nowrap">查看单价构成</button>
          </div>
          <div className="mb-0.5 flex min-h-0 flex-1">
            <LowerGrid />
            <SidePanel />
          </div>
        </div>
      </main>
      <StatusBar />
      <Taskbar />
      <QueryDialog />
      <ImeBar />
      <div className="pointer-events-none absolute top-[324px] left-[345px] z-50 h-8 w-[173px] border-[7px] border-[#fe0000]" />
      <div className="pointer-events-none absolute top-[360px] left-[396px] z-50 h-[30px] w-[148px] border-[7px] border-[#fe0000]" />
      <div className="pointer-events-none absolute top-[304px] left-[524px] z-50 h-10 w-[340px] border-[7px] border-[#fe0000]" />
    </div>
  );
}
